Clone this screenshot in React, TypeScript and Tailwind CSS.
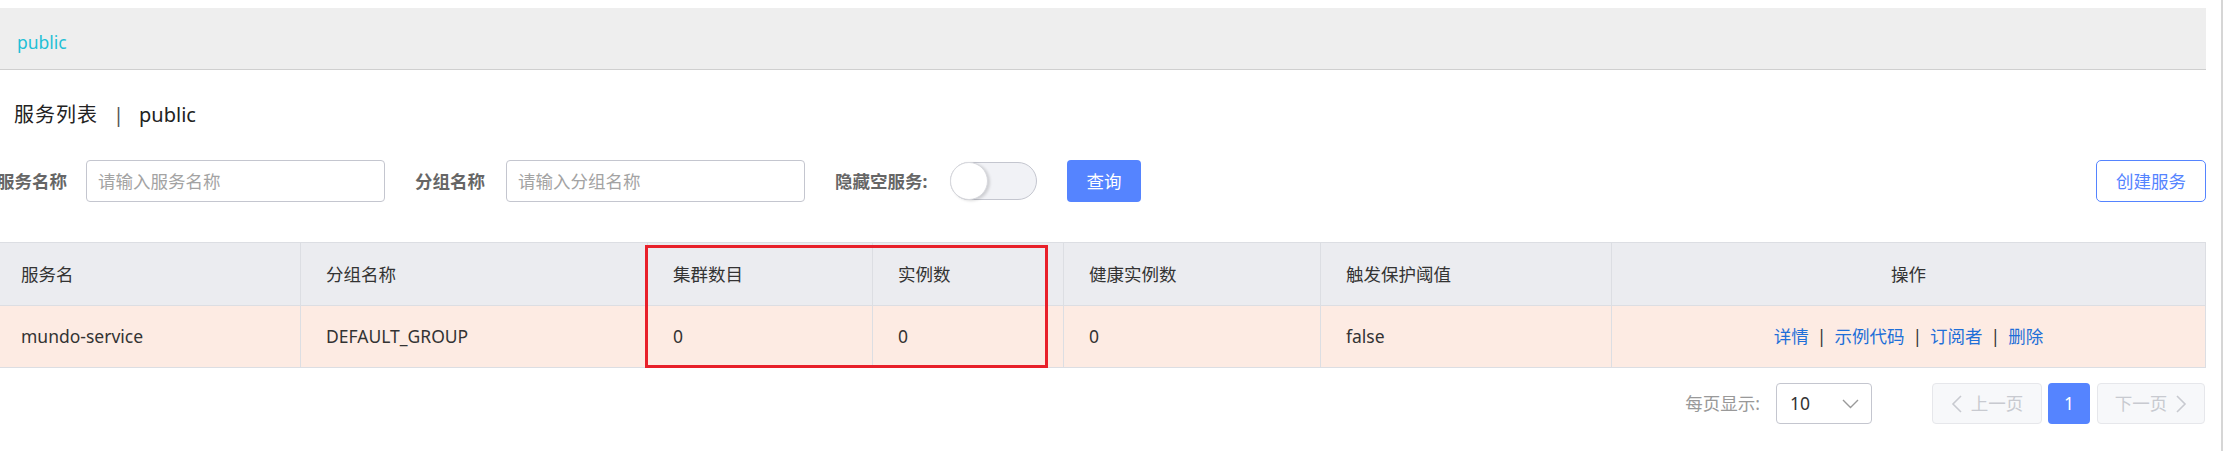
import React from "react";

const cols = [
  "服务名",
  "分组名称",
  "集群数目",
  "实例数",
  "健康实例数",
  "触发保护阈值",
];
const vals = ["mundo-service", "DEFAULT_GROUP", "0", "0", "0", "false"];

function ChevronDown() {
  return (
    <svg width="17" height="10" viewBox="0 0 17 10" fill="none">
      <polyline points="1,1 8.5,8.5 16,1" stroke="#9a9a9a" strokeWidth="1.4" />
    </svg>
  );
}
function ChevronLeft() {
  return (
    <svg width="11" height="18" viewBox="0 0 11 18" fill="none">
      <polyline points="10,1 2,9 10,17" stroke="#c8cad0" strokeWidth="1.6" />
    </svg>
  );
}
function ChevronRight() {
  return (
    <svg width="11" height="18" viewBox="0 0 11 18" fill="none">
      <polyline points="1,1 9,9 1,17" stroke="#c8cad0" strokeWidth="1.6" />
    </svg>
  );
}

export default function App() {
  return (
    <div className="relative flex h-[451px] w-[2224px] overflow-hidden bg-white font-['Noto_Sans','Noto_Sans_CJK_SC',sans-serif] text-[17.5px] text-[#333]">
      <div className="w-[2221px] shrink-0">
        <div className="ml-[-5px] w-[2211px] pt-[8px]">
          {/* top bar */}
          <div className="h-[62px] border-b border-[#cfcfcf] bg-[#eeeeee] pl-[22px] pt-[22px] leading-[24px] text-[#1fc0d6]">
            public
          </div>

          {/* title */}
          <div className="mt-[31px] flex h-[28px] items-center pl-[19px] text-[20px] leading-[28px] text-[#222]">
            <span className="tracking-[1px]">服务列表</span>
            <span className="mx-[15px] text-[#555]">|</span>
            <span>public</span>
          </div>

          {/* filter row */}
          <div className="mt-[31px] flex h-[42px] items-center pl-[2px]">
            <span className="mr-[19px] w-[70px] shrink-0 whitespace-nowrap font-bold text-[#666]">服务名称</span>
            <input
              className="mr-[30px] h-[42px] w-[299px] shrink-0 rounded-[4px] border border-[#c4c6cf] px-[11px] text-[17.5px] outline-none placeholder:text-[#a3a3a3]"
              placeholder="请输入服务名称"
            />
            <span className="mr-[19px] w-[72px] shrink-0 whitespace-nowrap font-bold text-[#666]">分组名称</span>
            <input
              className="mr-[30px] h-[42px] w-[299px] shrink-0 rounded-[4px] border border-[#c4c6cf] px-[11px] text-[17.5px] outline-none placeholder:text-[#a3a3a3]"
              placeholder="请输入分组名称"
            />
            <span className="mr-[20px] w-[95px] shrink-0 whitespace-nowrap font-bold text-[#666]">隐藏空服务:</span>
            <div className="relative mr-[30px] h-[38px] w-[87px] shrink-0 rounded-full border border-[#c4c6cf] bg-[#f1f2f6]">
              <div className="absolute left-[-1px] top-[-1px] h-[38px] w-[38px] rounded-full border border-[#d8d9de] bg-white shadow-[2px_1px_3px_rgba(0,0,0,0.15)]" />
            </div>
            <button className="flex h-[42px] w-[74px] shrink-0 items-center justify-center rounded-[4px] bg-[#5584ff] text-white">
              查询
            </button>
            <button className="ml-auto flex h-[42px] w-[110px] shrink-0 items-center justify-center rounded-[5px] border border-[#5584ff] bg-white text-[#5584ff]">
              创建服务
            </button>
          </div>

          {/* table */}
          <div className="mt-[40px] border border-b-0 border-[#dcdee3]">
            <div className="grid h-[63px] grid-cols-[305px_347px_225px_191px_257px_291px_593px] border-b border-[#dcdee3] bg-[#ebecf0]">
              {cols.map((c) => (
                <div key={c} className="flex items-center border-r border-[#dcdee3] pl-[25px]">
                  {c}
                </div>
              ))}
              <div className="flex items-center justify-center">操作</div>
            </div>
            <div className="grid h-[62px] grid-cols-[305px_347px_225px_191px_257px_291px_593px] border-b border-[#dcdee3] bg-[#fdebe3]">
              {vals.map((v, i) => (
                <div key={i} className="flex items-center border-r border-[#dcdee3] pl-[25px]">
                  {v}
                </div>
              ))}
              <div className="flex items-center justify-center text-[#1f6fd8]">
                <span>详情</span>
                <span className="mx-[8px] text-[#333]">|</span>
                <span>示例代码</span>
                <span className="mx-[8px] text-[#333]">|</span>
                <span>订阅者</span>
                <span className="mx-[8px] text-[#333]">|</span>
                <span>删除</span>
              </div>
            </div>
          </div>

          {/* pagination */}
          <div className="mt-[15px] flex h-[41px] items-center justify-end pr-[1px]">
            <span className="mr-[16px] text-[#999]">每页显示:</span>
            <div className="flex h-[41px] w-[96px] items-center justify-between rounded-[4px] border border-[#c4c6cf] pl-[13px] pr-[12px]">
              <span className="text-[#333]">10</span>
              <ChevronDown />
            </div>
            <div className="ml-[60px] flex h-[41px] w-[110px] items-center justify-center gap-[9px] rounded-[4px] border border-[#e6e7eb] bg-[#f7f8fa] text-[#c8cad0]">
              <ChevronLeft />
              <span>上一页</span>
            </div>
            <div className="ml-[6px] flex h-[41px] w-[42px] items-center justify-center rounded-[4px] bg-[#5584ff] text-white">
              1
            </div>
            <div className="ml-[7px] flex h-[41px] w-[108px] items-center justify-center gap-[9px] rounded-[4px] border border-[#e6e7eb] bg-[#f7f8fa] text-[#c8cad0]">
              <span>下一页</span>
              <ChevronRight />
            </div>
          </div>
        </div>
      </div>
      <div className="w-[2px] shrink-0 bg-[#d6d6d6]" />

      {/* annotation box */}
      <div className="pointer-events-none absolute left-[645px] top-[245px] h-[123px] w-[403px] border-[3px] border-[#e8202a]" />
    </div>
  );
}
